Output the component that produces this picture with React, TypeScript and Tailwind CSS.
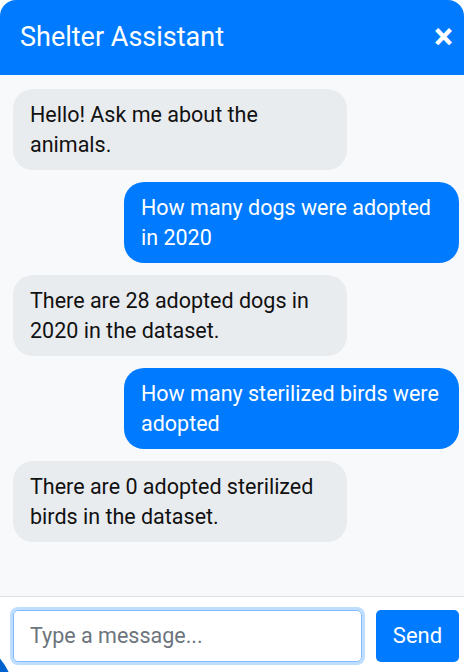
import React from "react";

const messages: { from: "bot" | "user"; text: string }[] = [
  { from: "bot", text: "Hello! Ask me about the animals." },
  { from: "user", text: "How many dogs were adopted in 2020" },
  { from: "bot", text: "There are 28 adopted dogs in 2020 in the dataset." },
  { from: "user", text: "How many sterilized birds were adopted" },
  { from: "bot", text: "There are 0 adopted sterilized birds in the dataset." },
];

export default function App() {
  return (
    <div
      className="relative w-[464px] h-[672px] overflow-hidden bg-white"
      style={{ fontFamily: "Roboto, 'Liberation Sans', sans-serif" }}
    >
      <div className="relative flex flex-col w-[464px] h-[672px] rounded-t-[16px] overflow-hidden">
        <div className="flex items-center justify-between h-[75px] bg-[#007bff] pl-[20px] pr-[11px] shrink-0">
          <span className="text-white text-[27px] leading-none">Shelter Assistant</span>
          <span className="text-white text-[36px] font-bold leading-none mt-[-2px]">×</span>
        </div>
        <div className="flex flex-col gap-[12px] flex-1 bg-[#f8f9fa] pl-[13px] pr-[5px] pt-[14px]">
          {messages.map((m, i) => (
            <div
              key={i}
              className={
                m.from === "bot"
                  ? "self-start w-[334px] bg-[#e9ecef] text-[#111] rounded-[20px] px-[17px] py-[10.5px] text-[21.5px] leading-[30px]"
                  : "self-end w-[335px] bg-[#007bff] text-white rounded-[20px] px-[17px] py-[10.5px] text-[21.5px] leading-[30px]"
              }
            >
              {m.text}
            </div>
          ))}
        </div>
        <div className="flex items-center gap-[14px] h-[76px] border-t border-[#dee2e6] bg-white pl-[13px] pr-[5px] pt-[2px] shrink-0">
          <input
            className="flex-1 h-[52px] rounded-[5px] border border-[#80bdff] px-[16px] text-[21.5px] text-[#495057] placeholder:text-[#6c757d] outline-none shadow-[0_0_0_3px_rgba(0,123,255,0.25)]"
            placeholder="Type a message..."
          />
          <button className="w-[83px] h-[52px] rounded-[5px] bg-[#007bff] text-white text-[22px]">
            Send
          </button>
        </div>
      </div>
      <div className="absolute left-[-115px] bottom-[-93px] w-[130px] h-[130px] rounded-full bg-[#0062cc]" />
    </div>
  );
}
